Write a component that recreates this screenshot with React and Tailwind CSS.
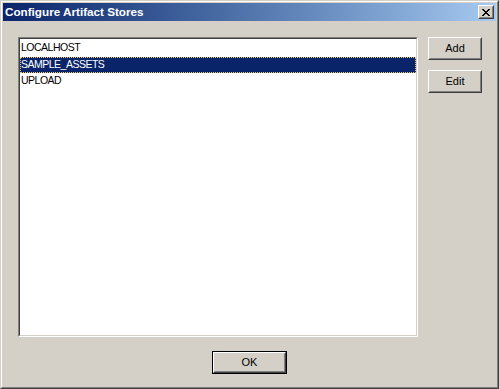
const items = ['LOCALHOST', 'SAMPLE_ASSETS', 'UPLOAD'];

const Btn = ({ children, isDefault }) => {
    const inner = (
        <div className="h-full w-full border border-t-white border-l-white border-b-[#404040] border-r-[#404040]">
            <div className="h-full w-full flex items-center justify-center border border-t-[#d4d0c8] border-l-[#d4d0c8] border-b-[#808080] border-r-[#808080] text-[11px] text-black">
                {children}
            </div>
        </div>
    );
    if (isDefault) {
        return <div className="w-[75px] h-[23px] border border-black">{inner}</div>;
    }
    return <div className="w-[54px] h-[23px]">{inner}</div>;
};

const App = () => {
    return (
        <div
            className="w-[499px] h-[389px] border border-t-[#d4d0c8] border-l-[#d4d0c8] border-b-[#404040] border-r-[#404040] bg-[#d4d0c8]"
            style={{ fontFamily: '"Liberation Sans", Arial, sans-serif' }}
        >
            <div className="h-full w-full border border-t-white border-l-white border-b-[#808080] border-r-[#808080] p-px flex flex-col">
                {/* Title bar */}
                <div className="h-[18px] flex items-center justify-between bg-linear-to-r from-[#0a246a] to-[#a6caf0] pl-[2px] pr-[2px]">
                    <span className="text-white font-bold text-[11.7px] leading-none">Configure Artifact Stores</span>
                    <div className="w-[16px] h-[14px] border border-t-white border-l-white border-b-[#404040] border-r-[#404040] bg-[#d4d0c8]">
                        <div className="h-full w-full border border-t-[#d4d0c8] border-l-[#d4d0c8] border-b-[#808080] border-r-[#808080] flex items-center justify-center">
                            <svg width="8" height="7" viewBox="0 0 8 7" shapeRendering="crispEdges">
                                <path d="M0 0h2v1h-2zM6 0h2v1h-2zM1 1h2v1h-2zM5 1h2v1h-2zM2 2h4v1h-4zM3 3h2v1h-2zM2 4h4v1h-4zM1 5h2v1h-2zM5 5h2v1h-2zM0 6h2v1h-2zM6 6h2v1h-2z" fill="#000" />
                            </svg>
                        </div>
                    </div>
                </div>

                {/* Body */}
                <div className="flex-1 flex flex-col pl-[15px] pt-[16px]">
                    <div className="flex gap-[10px]">
                        <div className="w-[400px] h-[300px] border border-t-[#808080] border-l-[#808080] border-b-white border-r-white">
                            <div className="h-full w-full border border-t-[#404040] border-l-[#404040] border-b-[#d4d0c8] border-r-[#d4d0c8] bg-white flex flex-col">
                                {items.map((name, i) => (
                                    <div
                                        key={name}
                                        className={
                                            i === 1
                                                ? 'h-[16px] flex items-center bg-[#0a246a] text-white border border-dotted border-[#f0d070] text-[10.5px] tracking-[-0.5px]'
                                                : i === 0
                                                ? 'h-[18px] flex items-center pl-px text-black text-[10.5px] tracking-[-0.5px]'
                                                : 'h-[16px] flex items-center pl-px text-black text-[10.5px] tracking-[-0.5px]'
                                        }
                                    >
                                        {name}
                                    </div>
                                ))}
                            </div>
                        </div>
                        <div className="flex flex-col gap-[10px]">
                            <Btn>Add</Btn>
                            <Btn>Edit</Btn>
                        </div>
                    </div>
                    <div className="flex justify-center mt-[14px] pr-[15px]">
                        <Btn isDefault>OK</Btn>
                    </div>
                </div>
            </div>
        </div>
    );
};

export default App;
